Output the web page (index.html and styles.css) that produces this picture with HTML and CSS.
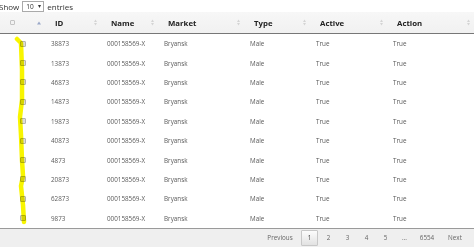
FILE: index.html
```html
<!DOCTYPE html>
<html lang="en">
<head>
  <meta charset="UTF-8" />
  <title>Records</title>
  <link rel="stylesheet" href="styles.css">
</head>
<body>

<div id="page">
  <div class="length-bar">
    Show
    <span class="length-select">10 <span class="caret">&#9662;</span></span>
    entries
  </div>

  <table class="records">
    <colgroup>
      <col style="width:45px">
      <col style="width:56px">
      <col style="width:57px">
      <col style="width:86px">
      <col style="width:66px">
      <col style="width:77px">
      <col style="width:87px">
    </colgroup>
    <thead>
      <tr>
        <th><div class="th-inner"><span class="check head-check"></span><svg class="sort asc" width="4" height="4" viewBox="0 0 4 4"><path d="M0 3.5 L2 0.5 L4 3.5 Z"/></svg></div></th>
        <th><div class="th-inner">ID<svg class="sort" width="3" height="7" viewBox="0 0 3 7"><path d="M0 3 L1.5 0.5 L3 3 Z M0 4 L1.5 6.5 L3 4 Z"/></svg></div></th>
        <th><div class="th-inner">Name<svg class="sort" width="3" height="7" viewBox="0 0 3 7"><path d="M0 3 L1.5 0.5 L3 3 Z M0 4 L1.5 6.5 L3 4 Z"/></svg></div></th>
        <th><div class="th-inner">Market<svg class="sort" width="3" height="7" viewBox="0 0 3 7"><path d="M0 3 L1.5 0.5 L3 3 Z M0 4 L1.5 6.5 L3 4 Z"/></svg></div></th>
        <th><div class="th-inner">Type<svg class="sort" width="3" height="7" viewBox="0 0 3 7"><path d="M0 3 L1.5 0.5 L3 3 Z M0 4 L1.5 6.5 L3 4 Z"/></svg></div></th>
        <th><div class="th-inner">Active<svg class="sort" width="3" height="7" viewBox="0 0 3 7"><path d="M0 3 L1.5 0.5 L3 3 Z M0 4 L1.5 6.5 L3 4 Z"/></svg></div></th>
        <th><div class="th-inner">Action<svg class="sort" width="3" height="7" viewBox="0 0 3 7"><path d="M0 3 L1.5 0.5 L3 3 Z M0 4 L1.5 6.5 L3 4 Z"/></svg></div></th>
      </tr>
    </thead>
    <tbody>
      <tr><td><span class="check"></span></td><td>38873</td><td>000158569-X</td><td>Bryansk</td><td>Male</td><td>True</td><td>True</td></tr>
      <tr><td><span class="check"></span></td><td>13873</td><td>000158569-X</td><td>Bryansk</td><td>Male</td><td>True</td><td>True</td></tr>
      <tr><td><span class="check"></span></td><td>46873</td><td>000158569-X</td><td>Bryansk</td><td>Male</td><td>True</td><td>True</td></tr>
      <tr><td><span class="check"></span></td><td>14873</td><td>000158569-X</td><td>Bryansk</td><td>Male</td><td>True</td><td>True</td></tr>
      <tr><td><span class="check"></span></td><td>19873</td><td>000158569-X</td><td>Bryansk</td><td>Male</td><td>True</td><td>True</td></tr>
      <tr><td><span class="check"></span></td><td>40873</td><td>000158569-X</td><td>Bryansk</td><td>Male</td><td>True</td><td>True</td></tr>
      <tr><td><span class="check"></span></td><td>4873</td><td>000158569-X</td><td>Bryansk</td><td>Male</td><td>True</td><td>True</td></tr>
      <tr><td><span class="check"></span></td><td>20873</td><td>000158569-X</td><td>Bryansk</td><td>Male</td><td>True</td><td>True</td></tr>
      <tr><td><span class="check"></span></td><td>62873</td><td>000158569-X</td><td>Bryansk</td><td>Male</td><td>True</td><td>True</td></tr>
      <tr><td><span class="check"></span></td><td>9873</td><td>000158569-X</td><td>Bryansk</td><td>Male</td><td>True</td><td>True</td></tr>
    </tbody>
  </table>

  <div class="pager">
    <span class="page-btn prev">Previous</span>
    <span class="page-btn num current">1</span>
    <span class="page-btn num">2</span>
    <span class="page-btn num">3</span>
    <span class="page-btn num">4</span>
    <span class="page-btn num">5</span>
    <span class="page-btn num">&hellip;</span>
    <span class="page-btn last">6554</span>
    <span class="page-btn next">Next</span>
  </div>

  <!-- highlighter stroke drawn over the checkbox column -->
  <svg class="marker" width="40" height="247" viewBox="0 0 40 247">
    <path d="M17 39 L21 43 L22 70 L22 100 L20 117 L21 135 L22 160 L23 176 L21 186 L23 205 L24 222"/>
  </svg>
</div>

</body>
</html>
```

FILE: styles.css
```css
body {
  margin: 0;
  background: #fff;
  font-family: "Open Sans", "Liberation Sans", sans-serif;
  color: #555;
}

#page {
  position: relative;
  width: 474px;
  height: 247px;
  overflow: hidden;
}

.length-bar {
  display: flex;
  align-items: center;
  gap: 3px;
  height: 12px;
  margin-left: -1px;
  font-size: 8px;
  color: #333;
}

.length-select {
  display: flex;
  align-items: center;
  justify-content: space-between;
  box-sizing: border-box;
  width: 22px;
  height: 11px;
  padding: 0 2px 0 3px;
  border: 1px solid #aaa;
  background: #fff;
  font-size: 6.5px;
}

.caret {
  font-size: 6px;
}

.records {
  width: 474px;
  table-layout: fixed;
  border-collapse: collapse;
  border-bottom: 1px solid #9a9a9a;
}

.records th {
  height: 21px;
  padding: 0 4px 0 10px;
  background: linear-gradient(#f7f7f7, #f1f1f1);
  border-bottom: 1.5px solid #777;
  font-size: 7.8px;
  font-weight: bold;
  text-align: left;
  color: #222;
}

.th-inner {
  display: flex;
  align-items: center;
  justify-content: space-between;
}

.sort {
  fill: #d4d4d4;
}

.sort.asc {
  fill: #9aa8c8;
}

.records td {
  height: 19.4px;
  padding: 0 0 0 6px;
  font-size: 6.3px;
  color: #5a5a5a;
}

.records td:first-child {
  padding-left: 20px;
}

.check {
  display: block;
  box-sizing: border-box;
  width: 6px;
  height: 6px;
  border: 1px solid #b4b4b4;
  border-radius: 1px;
  background: #dcdcdc;
}

.head-check {
  border-color: #c4c4c4;
  background: #f2f2f2;
  width: 5px;
  height: 5px;
}

.pager {
  display: flex;
  align-items: center;
  justify-content: flex-end;
  gap: 2px;
  height: 18px;
  padding-right: 5px;
  background: #efefef;
  font-size: 6.3px;
  color: #666;
}

.page-btn {
  display: flex;
  align-items: center;
  justify-content: center;
  box-sizing: border-box;
  height: 16px;
}

.prev {
  width: 32px;
  margin-right: 3px;
}

.num {
  width: 17px;
}

.last {
  width: 24px;
}

.next {
  width: 28px;
}

.current {
  border: 1px solid #c8c8c8;
  border-radius: 1px;
  background: linear-gradient(#fcfcfc, #e2e2e2);
  color: #444;
}

.marker {
  position: absolute;
  left: 0;
  top: 0;
  mix-blend-mode: multiply;
}

.marker path {
  fill: none;
  stroke: #f8f500;
  stroke-width: 4.5;
  stroke-linecap: round;
  stroke-linejoin: round;
}
```
